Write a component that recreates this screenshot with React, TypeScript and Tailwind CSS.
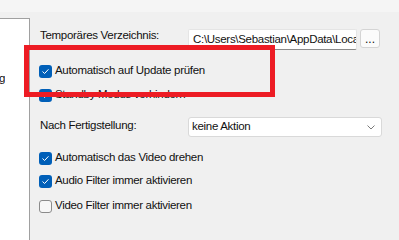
import React from 'react';

const font = { fontFamily: '"Liberation Sans", Arial, sans-serif' };

const Check = ({ checked }: { checked: boolean }) =>
    checked ? (
        <span className="flex items-center justify-center w-[13px] h-[13px] rounded-[3px] bg-[#005fb8] shrink-0">
            <svg width="9" height="9" viewBox="0 0 9 9" fill="none">
                <path d="M1.8 4.8 L3.6 6.5 L7.2 2.6" stroke="#ffffff" strokeWidth="1" strokeLinecap="round" strokeLinejoin="round" />
            </svg>
        </span>
    ) : (
        <span className="w-[13px] h-[13px] rounded-[3px] border border-[#8b8b8b] bg-[#f7f7f7] shrink-0" />
    );

const CheckRow = ({ label, checked, className = '' }: { label: string; checked: boolean; className?: string }) => (
    <div className={`flex items-center h-[16px] gap-[3px] -ml-[1px] ${className}`}>
        <Check checked={checked} />
        <span className="whitespace-nowrap">{label}</span>
    </div>
);

export default function App() {
    return (
        <div
            className="relative w-[399px] h-[240px] bg-[#f0f0f0] flex flex-col overflow-hidden text-[11.5px] tracking-[-0.3px] text-[#111111]"
            style={font}
        >
            <div className="h-[12px] bg-[#f5f5f5] shrink-0" />

            <div className="flex flex-1 pt-[6px]">
                {/* left navigation list, scrolled out of view */}
                <div className="w-[30px] bg-white border-t border-r border-[#a0a0a0] shrink-0">
                    <div className="mt-[52px] w-[5px] h-[16px] flex justify-end items-center overflow-hidden">
                        <span className="whitespace-nowrap">Einstellung</span>
                    </div>
                </div>

                <div className="flex flex-col flex-1 pl-[10px]">
                    <div className="flex items-start mt-[9px]">
                        <span className="w-[148px] h-[16px] leading-[16px] whitespace-nowrap">Temporäres Verzeichnis:</span>
                        <div className="mt-[2px] w-[169px] h-[21px] bg-white border border-[#e5e5e5] border-b-[#8a8a8a] rounded-[2px] flex items-center pl-[4px] overflow-hidden">
                            <span className="whitespace-nowrap">C:\Users\Sebastian\AppData\Local</span>
                        </div>
                        <button className="mt-[2px] ml-[3px] w-[20px] h-[19px] bg-[#fbfbfb] border border-[#d4d4d4] rounded-[3px] flex items-center justify-center leading-none text-[12px] tracking-normal">
                            ...
                        </button>
                    </div>

                    <CheckRow label="Automatisch auf Update prüfen" checked className="mt-[13px]" />
                    <CheckRow label="Standby Modus verhindern" checked className="mt-[8px]" />

                    <div className="flex items-start mt-[14px]">
                        <span className="w-[148px] h-[16px] leading-[16px] whitespace-nowrap">Nach Fertigstellung:</span>
                        <div className="w-[194px] h-[20px] bg-white border border-[#d9d9d9] rounded-[3px] flex items-center justify-between pl-[3px] pr-[6px]">
                            <span>keine Aktion</span>
                            <svg width="8" height="5" viewBox="0 0 8 5" fill="none">
                                <path d="M0.5 0.5 L4 4 L7.5 0.5" stroke="#7a7a7a" strokeWidth="1" />
                            </svg>
                        </div>
                    </div>

                    <CheckRow label="Automatisch das Video drehen" checked className="mt-[13px]" />
                    <CheckRow label="Audio Filter immer aktivieren" checked className="mt-[7px]" />
                    <CheckRow label="Video Filter immer aktivieren" checked={false} className="mt-[9px]" />
                </div>
            </div>

            {/* highlight frame drawn over the dialog */}
            <div className="absolute left-[24px] top-[45px] w-[251px] h-[52px] border-[5px] border-[#ed1c24] pointer-events-none" />
        </div>
    );
}
